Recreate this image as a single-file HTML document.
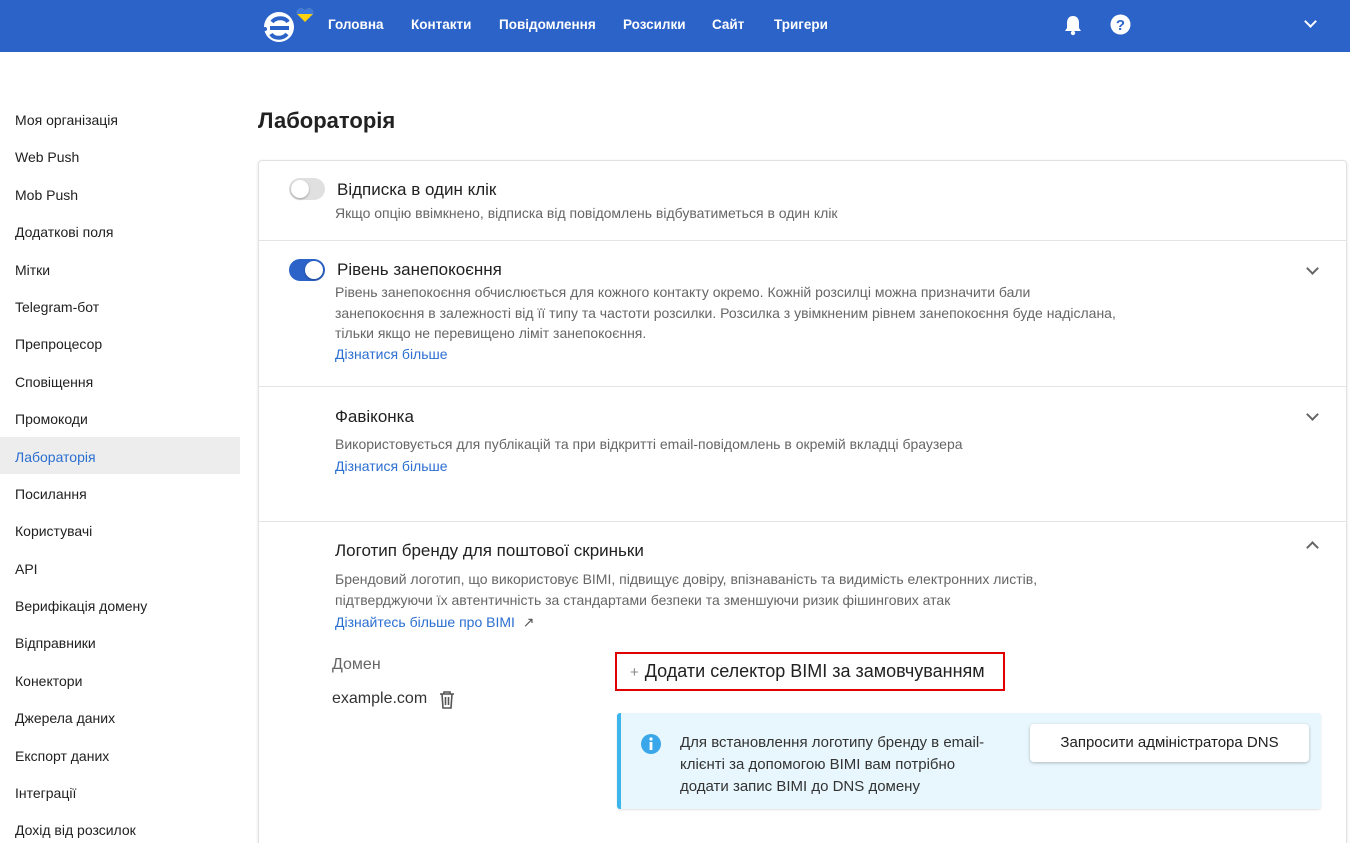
<!DOCTYPE html>
<html><head><meta charset="utf-8"><style>
*{box-sizing:border-box;margin:0;padding:0}
html,body{width:1350px;height:843px;overflow:hidden}
body{background:#fff;font-family:"Liberation Sans",sans-serif;color:#212121;position:relative}
.hdr{position:absolute;left:0;top:0;width:1350px;height:52px;background:#2b63c8}
.nav{position:absolute;top:17px;color:#fff;font-size:13.5px;font-weight:bold}
.side div{position:absolute;left:15px;font-size:14px;color:#212121}
.act{position:absolute;left:0;top:437px;width:240px;height:37px;background:#ededed}
h1{position:absolute;left:258px;top:108px;font-size:22px;font-weight:bold}
.card{position:absolute;left:258px;top:160px;width:1089px;height:720px;border:1px solid #e2e2e2;border-radius:4px;box-shadow:0 1px 3px rgba(0,0,0,.12)}
.sep{position:absolute;left:258px;width:1089px;height:1px;background:#e4e4e4}
.t{position:absolute;font-size:17px;color:#212121}
.d{position:absolute;font-size:14px;color:#666;line-height:20.5px}
.l{position:absolute;font-size:14px;color:#2b6fd1}
.tg{position:absolute;width:36px;height:22px;border-radius:11px}
.tg i{position:absolute;top:2px;width:18px;height:18px;border-radius:50%;background:#fff;box-shadow:0 1px 2px rgba(0,0,0,.3)}
.chev{position:absolute;width:9px;height:9px;border-right:2px solid #666;border-bottom:2px solid #666}
</style></head><body>
<div class="hdr">
<svg style="position:absolute;left:260px;top:5px" width="54" height="40" viewBox="0 0 54 40"><circle cx="19" cy="22" r="15" fill="#fff"/><path d="M10 23h19M12 17c4-5 13-5 16 0M27 29c-4 5-13 5-16 0" stroke="#2b63c8" stroke-width="4" fill="none"/><circle cx="5" cy="24" r="2" fill="#2b63c8"/><path d="M45 17l-8-8a3.5 3.5 0 0 1 8-3a3.5 3.5 0 0 1 8 3z" fill="#fbd20c"/><path d="M37 9a3.5 3.5 0 0 1 8-3a3.5 3.5 0 0 1 8 3z" fill="#3b78e0"/></svg>
<div class="nav" style="left:328px">Головна</div><div class="nav" style="left:411px">Контакти</div><div class="nav" style="left:499px">Повідомлення</div><div class="nav" style="left:623px">Розсилки</div><div class="nav" style="left:712px">Сайт</div><div class="nav" style="left:774px">Тригери</div>
<svg style="position:absolute;left:1063px;top:14px" width="20" height="22" viewBox="0 0 20 22"><path d="M10 2c-4 0-6 3-6 7v5l-2 3h16l-2-3V9c0-4-2-7-6-7z" fill="#fff"/><circle cx="10" cy="19" r="2.2" fill="#fff"/></svg>
<svg style="position:absolute;left:1110px;top:14px" width="21" height="21"><circle cx="10.5" cy="10.5" r="10" fill="#fff"/><text x="10.5" y="16" text-anchor="middle" font-size="15" font-weight="bold" fill="#2b63c8" font-family="Liberation Sans">?</text></svg>
<div class="chev" style="left:1306px;top:17px;border-color:#fff;transform:rotate(45deg)"></div>
</div>
<div class="act"></div>
<div class="side">
<div style="top:112px">Моя організація</div><div style="top:149px">Web Push</div><div style="top:187px">Mob Push</div><div style="top:224px">Додаткові поля</div><div style="top:262px">Мітки</div><div style="top:299px">Telegram-бот</div><div style="top:336px">Препроцесор</div><div style="top:374px">Сповіщення</div><div style="top:411px">Промокоди</div><div style="top:449px;color:#2b6fd1">Лабораторія</div><div style="top:486px">Посилання</div><div style="top:523px">Користувачі</div><div style="top:561px">API</div><div style="top:598px">Верифікація домену</div><div style="top:635px">Відправники</div><div style="top:673px">Конектори</div><div style="top:710px">Джерела даних</div><div style="top:748px">Експорт даних</div><div style="top:785px">Інтеграції</div><div style="top:822px">Дохід від розсилок</div>
</div>
<h1>Лабораторія</h1>
<div class="card"></div>
<div class="sep" style="top:240px"></div><div class="sep" style="top:386px"></div><div class="sep" style="top:521px"></div>
<div class="tg" style="left:289px;top:178px;background:#e0e0e0"><i style="left:2px"></i></div>
<div class="t" style="left:337px;top:180px">Відписка в один клік</div>
<div class="d" style="left:335px;top:203px">Якщо опцію ввімкнено, відписка від повідомлень відбуватиметься в один клік</div>
<div class="tg" style="left:289px;top:259px;background:#2b63c8"><i style="left:16px"></i></div>
<div class="t" style="left:337px;top:260px">Рівень занепокоєння</div>
<div class="d" style="left:335px;top:282px;width:783px">Рівень занепокоєння обчислюється для кожного контакту окремо. Кожній розсилці можна призначити бали занепокоєння в залежності від її типу та частоти розсилки. Розсилка з увімкненим рівнем занепокоєння буде надіслана, тільки якщо не перевищено ліміт занепокоєння.</div>
<div class="l" style="left:335px;top:346px">Дізнатися більше</div>
<div class="chev" style="left:1308px;top:264px;transform:rotate(45deg)"></div>
<div class="t" style="left:335px;top:407px">Фавіконка</div>
<div class="d" style="left:335px;top:434px">Використовується для публікацій та при відкритті email-повідомлень в окремій вкладці браузера</div>
<div class="l" style="left:335px;top:458px">Дізнатися більше</div>
<div class="chev" style="left:1308px;top:410px;transform:rotate(45deg)"></div>
<div class="t" style="left:335px;top:541px">Логотип бренду для поштової скриньки</div>
<div class="d" style="left:335px;top:569px;width:760px">Брендовий логотип, що використовує BIMI, підвищує довіру, впізнаваність та видимість електронних листів, підтверджуючи їх автентичність за стандартами безпеки та зменшуючи ризик фішингових атак</div>
<div class="l" style="left:335px;top:614px">Дізнайтесь більше про BIMI <span style="color:#555;margin-left:4px">↗</span></div>
<div class="chev" style="left:1308px;top:543px;transform:rotate(-135deg)"></div>
<div class="d" style="left:332px;top:655px;font-size:16px;color:#666">Домен</div>
<div style="position:absolute;left:332px;top:690px;font-size:16px;color:#333">example.com</div>
<svg style="position:absolute;left:439px;top:691px" width="16" height="18" viewBox="0 0 16 18"><path d="M1 3h14M5 3V1h6v2M3 3l1 14h8l1-14M6.5 6v8M9.5 6v8" stroke="#555" stroke-width="1.6" fill="none"/></svg>
<div style="position:absolute;left:615px;top:652px;width:390px;height:39px;border:2px solid #e00000"></div>
<div style="position:absolute;left:630px;top:661px;font-size:18px;color:#212121"><span style="color:#888;font-size:15px;margin-right:6px">+</span>Додати селектор BIMI за замовчуванням</div>
<div style="position:absolute;left:617px;top:713px;width:704px;height:96px;background:#e8f7fd;border-left:4px solid #3cb4ec;border-radius:3px;box-shadow:0 1px 2px rgba(0,0,0,.12)"></div>
<svg style="position:absolute;left:640px;top:733px" width="22" height="22"><circle cx="11" cy="11" r="10" fill="#3aa7ea"/><rect x="9.6" y="9" width="2.8" height="8" fill="#fff"/><circle cx="11" cy="6" r="1.6" fill="#fff"/></svg>
<div class="d" style="left:680px;top:732px;width:318px;color:#333;font-size:15px;line-height:22px">Для встановлення логотипу бренду в email-клієнті за допомогою BIMI вам потрібно додати запис BIMI до DNS домену</div>
<div style="position:absolute;left:1030px;top:724px;width:279px;height:38px;background:#fff;border-radius:4px;box-shadow:0 1px 3px rgba(0,0,0,.25);font-size:15px;color:#212121;text-align:center;line-height:38px">Запросити адміністратора DNS</div>
</body></html>
